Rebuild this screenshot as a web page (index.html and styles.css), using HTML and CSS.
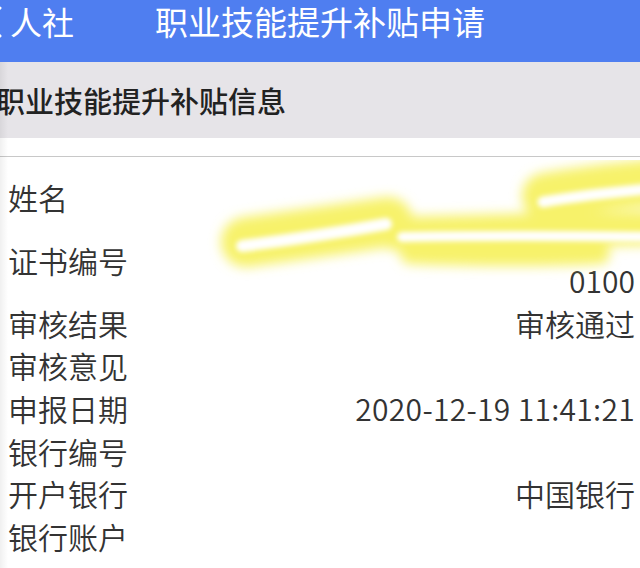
FILE: index.html
```html
<!DOCTYPE html>
<html lang="zh-CN">
<head>
<meta charset="utf-8">
<link rel="stylesheet" href="styles.css">
</head>
<body>
<div class="page">
  <header class="navbar">
    <svg class="back" width="12" height="40" viewBox="0 0 12 40"><path d="M6 6 L-8 20 L6 34" fill="none" stroke="#fff" stroke-width="3" stroke-linecap="round" stroke-linejoin="round"/></svg>
    <span class="nav-back">人社</span>
    <h1 class="nav-title">职业技能提升补贴申请</h1>
  </header>
  <section class="section-head">
    <h2 class="section-title">职业技能提升补贴信息</h2>
  </section>
  <div class="spacer"></div>
  <div class="list">
    <div class="row"><span class="label">姓名</span><span class="value"></span></div>
    <div class="row"><span class="label">证书编号</span><span class="value two">&nbsp;<br>0100</span></div>
    <div class="row"><span class="label">审核结果</span><span class="value">审核通过</span></div>
    <div class="row"><span class="label">审核意见</span><span class="value"></span></div>
    <div class="row"><span class="label">申报日期</span><span class="value date">2020-12-19 11:41:21</span></div>
    <div class="row"><span class="label">银行编号</span><span class="value"></span></div>
    <div class="row"><span class="label">开户银行</span><span class="value">中国银行</span></div>
    <div class="row"><span class="label">银行账户</span><span class="value"></span></div>
  </div>
  <svg class="scribble" width="640" height="130" viewBox="0 160 640 130">
    <defs>
      <filter id="soft" x="-20%" y="-60%" width="140%" height="220%"><feGaussianBlur stdDeviation="6"/></filter>
      <filter id="soft2" x="-20%" y="-60%" width="140%" height="220%"><feGaussianBlur stdDeviation="2.5"/></filter>
    </defs>
    <g filter="url(#soft)" stroke="#f7f26a" stroke-linecap="round" fill="none">
      <path d="M246 242 Q 320 232 388 222" stroke-width="50"/>
      <path d="M545 196 Q 590 188 660 182" stroke-width="46"/>
      <path d="M398 234 Q 520 230 660 228" stroke-width="34"/>
      <path d="M410 254 Q 520 258 600 254" stroke-width="20"/>
    </g>
    <g filter="url(#soft2)" stroke="#ffffff" stroke-linecap="round" fill="none">
      <path d="M242 246 Q 320 236 386 224" stroke-width="12"/>
      <path d="M543 202 Q 590 194 660 188" stroke-width="11"/>
      <path d="M402 237 Q 520 235 660 237" stroke-width="10"/>
    </g>
  </svg>
</div>
</body>
</html>
```

FILE: styles.css
```css
* { box-sizing: border-box; margin: 0; padding: 0; }
html, body { width: 640px; height: 568px; overflow: hidden; background: #fff; }
body { font-family: "Noto Sans CJK SC", "Noto Sans", sans-serif; }
.page { position: relative; width: 640px; height: 568px; overflow: hidden; }
.navbar {
  position: relative;
  height: 62px;
  background: #4f7ef0;
  color: #fff;
  display: flex;
  align-items: flex-start;
}
.back { position: absolute; left: -6px; top: 2px; }
.nav-back {
  position: absolute; left: 10px; top: 0;
  font-size: 32px; line-height: 42px; font-weight: 400;
}
.nav-title {
  flex: 1;
  text-align: center;
  font-size: 33px; line-height: 42px; font-weight: 400;
}
.section-head {
  height: 76px;
  background: #e6e4e8;
  display: flex;
  align-items: center;
}
.section-title {
  margin-left: -4px;
  font-size: 29px; line-height: 40px; font-weight: 500;
  color: #222;
}
.spacer { height: 19px; border-bottom: 1px solid #c8c8c8; }
.list { padding: 18.5px 5px 0 8px; }
.row {
  display: flex;
  justify-content: space-between;
  align-items: center;
  font-size: 30px;
  line-height: 42.7px;
  color: #333;
  font-weight: 350;
}
.label { white-space: nowrap; }
.value { text-align: right; white-space: nowrap; min-height: 42.7px; }
.two { margin-top: -2px; }
.date { letter-spacing: 0.3px; }
.scribble { position: absolute; left: 0; top: 160px; pointer-events: none; }
.page::before {
  content: ""; position: absolute; left: 0; top: 62px; bottom: 0; width: 8px;
  background: linear-gradient(to right, rgba(0,0,0,0.06), rgba(0,0,0,0));
  z-index: 2;
}
```
